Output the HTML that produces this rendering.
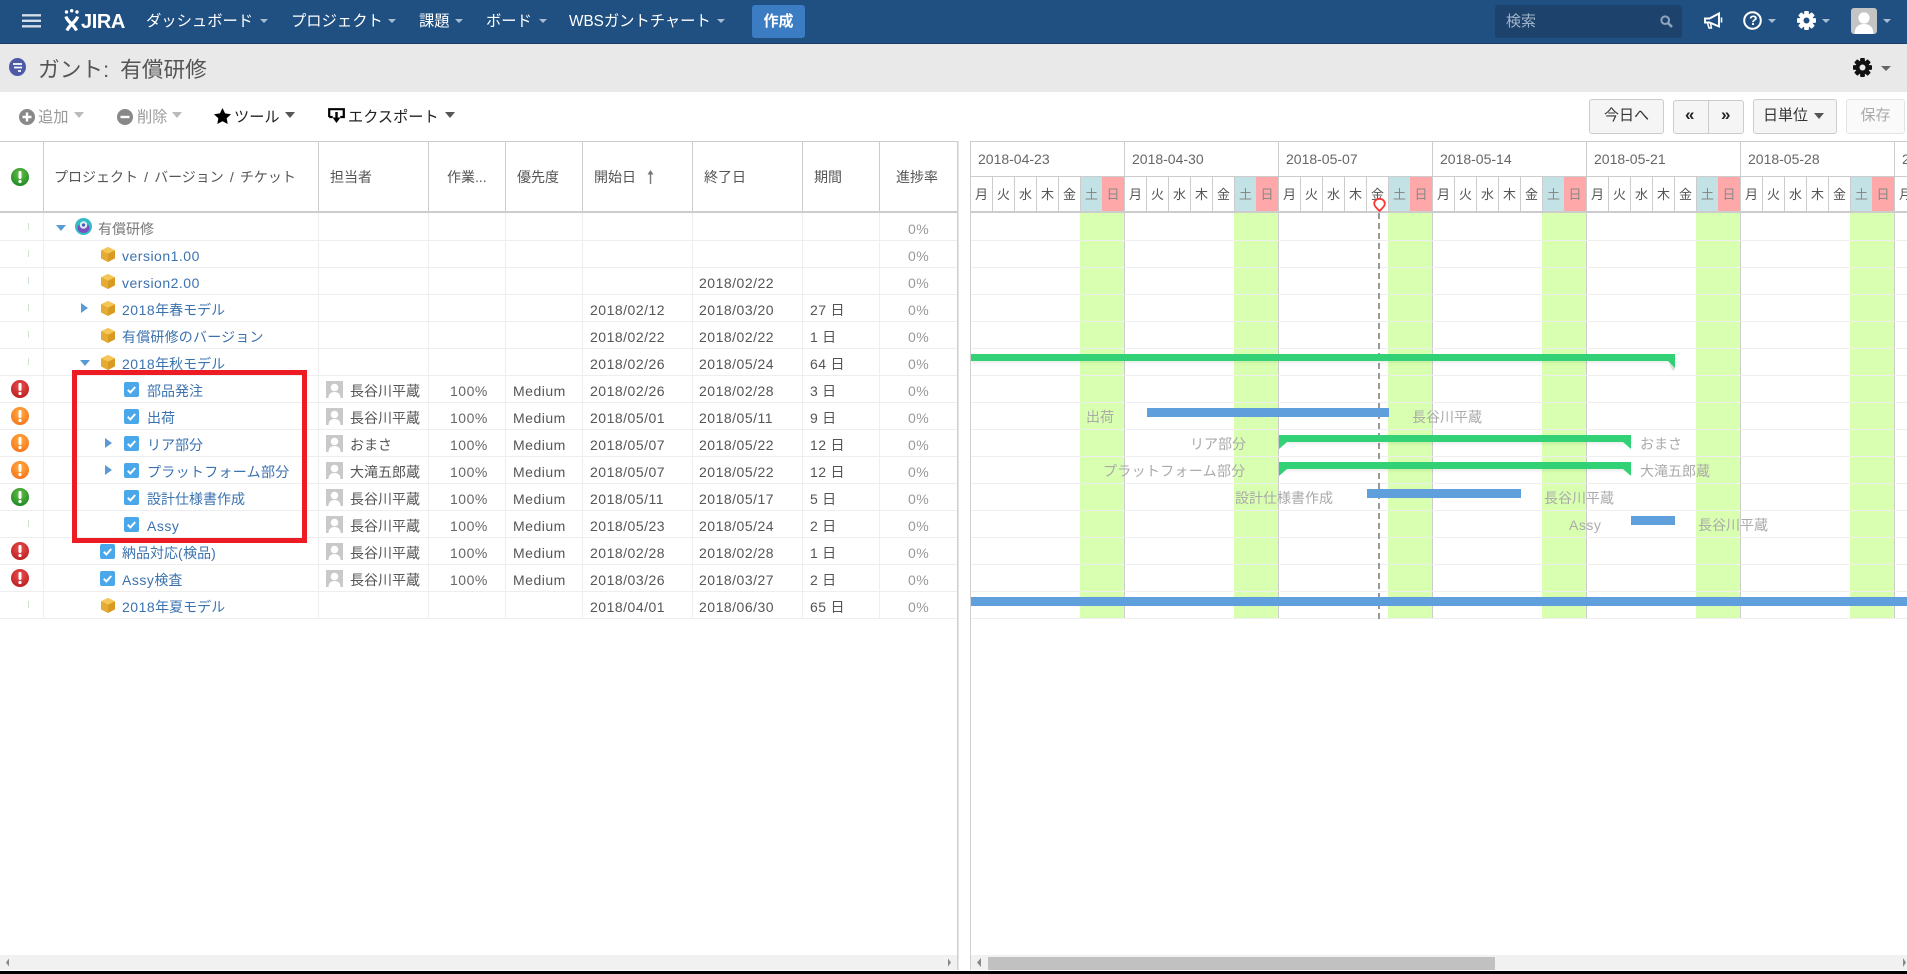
<!DOCTYPE html>
<html lang="ja"><head><meta charset="utf-8"><title>ガント: 有償研修</title>
<style>
html,body{margin:0;padding:0;background:#fff;width:1907px;height:974px;overflow:hidden}
body{position:relative;font:14px/27px "Liberation Sans","Noto Sans CJK JP",sans-serif;color:#555}
div,span,svg,a{position:absolute;white-space:nowrap}
i{font-style:normal;letter-spacing:.5px}
svg{overflow:visible}
#nav{left:0;top:0;width:1907px;height:43px;background:#205081;border-bottom:1px solid #1a3f66}
.n{top:7px;font-size:15.3px;line-height:30px;color:#fff}
.c{width:0;height:0;border-left:4.5px solid transparent;border-right:4.5px solid transparent;border-top:4.5px solid #a9bdd3}
#ph{left:0;top:44px;width:1907px;height:48px;background:#e9e9e9}
.tb{top:103px;font-size:15.2px;line-height:30px;color:#222}
.btn{box-sizing:border-box;background:#f5f5f5;border:1px solid #ccc;border-radius:3px;font-size:15px;color:#333;text-align:center;line-height:32px}
.v{top:213px;width:1px;height:406px;background:#eee}
.hv{top:141px;width:1px;height:70px;background:#ccc}
.h{top:162px;line-height:30px;color:#444;font-size:14px}
.r{left:0;width:957px;height:27px}
.r span{top:3px}
.p{left:11px;top:5px;width:18px;height:18px}
.k{left:28px;top:10px;width:1px;height:7px;background:#cfe3cf}
.a{left:326px;top:6px;width:17px;height:17px}
.b{left:101px;top:7px;width:14px;height:15px}
.cb{top:7px;width:15px;height:15px}
.l1{left:124px}.l2{left:100px}
.lk{color:#3b73af}
.tl{left:147px}.tx{left:122px}
.nm{left:350px}.pc{left:450px;color:#666}.pr{left:513px}.sd{left:590px}.ed{left:699px}.du{left:810px}.pg{left:908px;color:#999}
.tr{position:absolute;width:0;height:0;border-top:5.5px solid transparent;border-bottom:5.5px solid transparent;border-left:7px solid #5b9bd5}
.td{position:absolute;width:0;height:0;border-left:5.5px solid transparent;border-right:5.5px solid transparent;border-top:6px solid #5b9bd5}
#wk{left:970px;top:141px;width:937px;height:36px;background:#fff}
.w{top:0;height:36px;width:154px;box-sizing:border-box;border-left:1px solid #ccc;padding-left:7px;font-size:14px;line-height:36px;color:#666}
#dy{left:970px;top:177px;width:937px;height:34px;display:flex;overflow:hidden}
#dy u{display:block;flex:0 0 22px;box-sizing:border-box;border-left:1px solid #ccc;text-decoration:none;text-align:center;font-size:13px;line-height:35px;color:#555;height:34px}
#dy u:nth-child(7n+6){background:#c2e2e6;color:#888}
#dy u:nth-child(7n){background:#ffa8aa;color:#888;border-left:none}
.gr{top:213px;width:44px;height:406px;background:#d9ffb0}
.gl{top:213px;width:1px;height:406px;background:#ccc}
.bb{height:9px;background:#5e9fdc}
.bg{height:7px;background:#32d175;box-shadow:0 2px 3px rgba(0,0,0,.08)}
.gt{color:#aaa;line-height:27px}
</style></head><body>
<svg width="0" height="0" style="left:0;top:0">
<defs>
<radialGradient id="gr1" cx=".5" cy=".35" r=".7"><stop offset="0" stop-color="#ee5050"/><stop offset="1" stop-color="#b81c1c"/></radialGradient>
<radialGradient id="gr2" cx=".5" cy=".35" r=".7"><stop offset="0" stop-color="#ffb040"/><stop offset="1" stop-color="#f6701a"/></radialGradient>
<radialGradient id="gr3" cx=".5" cy=".35" r=".7"><stop offset="0" stop-color="#6cc04a"/><stop offset="1" stop-color="#17861f"/></radialGradient>
<symbol id="wr" viewBox="0 0 18 18"><circle cx="9" cy="9" r="9" fill="url(#gr1)"/><rect x="7.5" y="3" width="3" height="8" rx="1.2" fill="#fff"/><circle cx="9" cy="13.5" r="1.6" fill="#fff"/></symbol>
<symbol id="wo" viewBox="0 0 18 18"><circle cx="9" cy="9" r="9" fill="url(#gr2)"/><rect x="7.5" y="3" width="3" height="8" rx="1.2" fill="#fff"/><circle cx="9" cy="13.5" r="1.6" fill="#fff"/></symbol>
<symbol id="wg" viewBox="0 0 18 18"><circle cx="9" cy="9" r="9" fill="url(#gr3)"/><rect x="7.5" y="3" width="3" height="8" rx="1.2" fill="#fff"/><circle cx="9" cy="13.5" r="1.6" fill="#fff"/></symbol>
<symbol id="av" viewBox="0 0 17 17"><rect width="17" height="17" fill="#c9c9c9"/><circle cx="8.5" cy="6.5" r="3.8" fill="#fff"/><path d="M2.5 17c0-4 2.5-6 6-6s6 2 6 6z" fill="#fff"/></symbol>
<symbol id="cb" viewBox="0 0 15 15"><rect width="15" height="15" rx="2" fill="#4aa8ea"/><path d="M3.8 7.8l2.6 2.6 4.8-5.4" fill="none" stroke="#fff" stroke-width="2"/></symbol>
<symbol id="bx" viewBox="0 0 14 15"><path d="M7 0l7 3.4v8L7 15 0 11.4v-8z" fill="#d99a22"/><path d="M7 0l7 3.4L7 6.8 0 3.4z" fill="#f4c655"/><path d="M7 6.8v8.2L0 11.4v-8z" fill="#e5ac35"/></symbol>
<symbol id="gear" viewBox="0 0 20 20"><g fill="currentColor"><rect x="7.5" y="0" width="5" height="20" rx="1"/><rect x="7.5" y="0" width="5" height="20" rx="1" transform="rotate(45 10 10)"/><rect x="7.5" y="0" width="5" height="20" rx="1" transform="rotate(90 10 10)"/><rect x="7.5" y="0" width="5" height="20" rx="1" transform="rotate(135 10 10)"/><circle cx="10" cy="10" r="7.2"/></g></symbol>
</defs></svg>

<div id="nav"></div>
<svg style="left:22px;top:14px" width="19" height="14"><path d="M0 1.3h19M0 6.8h19M0 12.3h19" stroke="#d3deea" stroke-width="2.4"/></svg>
<svg style="left:64px;top:9px" width="16" height="22"><g fill="#fff"><circle cx="2.5" cy="3" r="1.7"/><circle cx="7.7" cy="1.7" r="1.7"/><circle cx="13" cy="3" r="1.7"/></g><path d="M2 7.5c1 5 8 8 10.5 14M13.5 7.5c-1 5-8 8-10.5 14" stroke="#fff" stroke-width="3.2" fill="none"/></svg>
<span style="left:81px;top:7px;font:bold 20px/30px 'Liberation Sans',sans-serif;color:#fff;letter-spacing:-.4px">JIRA</span>
<span class="n" style="left:146px">ダッシュボード</span><div class="c" style="left:260px;top:19px"></div>
<span class="n" style="left:291px">プロジェクト</span><div class="c" style="left:388px;top:19px"></div>
<span class="n" style="left:419px">課題</span><div class="c" style="left:455px;top:19px"></div>
<span class="n" style="left:486px">ボード</span><div class="c" style="left:539px;top:19px"></div>
<span class="n" style="left:569px">WBSガントチャート</span><div class="c" style="left:717px;top:19px"></div>
<div style="left:752px;top:5px;width:53px;height:33px;background:#3b7cc2;border-radius:3px;color:#fff;font-weight:bold;font-size:15px;line-height:33px;text-align:center">作成</div>
<div style="left:1495px;top:5px;width:187px;height:33px;background:#1d426c;border-radius:3px"></div>
<span style="left:1506px;top:6px;font-size:15px;line-height:31px;color:#9fb4cc">検索</span>
<svg style="left:1660px;top:15px" width="13" height="13"><circle cx="5.2" cy="5.2" r="3.8" fill="none" stroke="#8ea4bc" stroke-width="2"/><path d="M8 8l4 4" stroke="#8ea4bc" stroke-width="2.6"/></svg>
<svg style="left:1704px;top:12px" width="19" height="18"><path d="M1 6.5h4.5L15 1.5v13L5.5 10.5H1z" fill="none" stroke="#fff" stroke-width="1.9"/><path d="M3.5 11l1.5 5h2.4L6.5 11" fill="none" stroke="#fff" stroke-width="1.5"/><path d="M17.5 5.5v5" stroke="#fff" stroke-width="1.6"/></svg>
<svg style="left:1743px;top:11px" width="19" height="19"><circle cx="9.5" cy="9.5" r="8.3" fill="none" stroke="#fff" stroke-width="2"/></svg>
<span style="left:1749px;top:5px;font:bold 14px/30px 'Liberation Sans',sans-serif;color:#fff">?</span>
<div class="c" style="left:1768px;top:19px"></div>
<svg style="left:1797px;top:11px;color:#fff" width="19" height="19"><use href="#gear"/><circle cx="9.5" cy="9.5" r="3" fill="#205081"/></svg>
<div class="c" style="left:1822px;top:19px"></div>
<svg style="left:1851px;top:8px" width="26" height="26"><rect width="26" height="26" rx="3" fill="#c4c4c4"/><circle cx="13" cy="10" r="5.6" fill="#fff"/><path d="M3.5 26c0-7 4-10 9.5-10s9.5 3 9.5 10z" fill="#fff"/></svg>
<div class="c" style="left:1883px;top:19px"></div>

<div id="ph"></div>
<svg style="left:9px;top:58px" width="17" height="18"><ellipse cx="8.5" cy="9" rx="8.5" ry="9" fill="#4d5aa8"/><path d="M4 6h9M5 9.5h8M9 13h3" stroke="#fff" stroke-width="1.8" fill="none"/></svg>
<span style="left:38px;top:53px;font-size:21.7px;line-height:34px;color:#555;word-spacing:5px">ガント: 有償研修</span>
<svg style="left:1853px;top:58px;color:#111" width="19" height="19"><use href="#gear"/><circle cx="9.5" cy="9.5" r="3" fill="#e9e9e9"/></svg>
<div class="c" style="left:1881px;top:66px;border-left-width:5.5px;border-right-width:5.5px;border-top:5.5px solid #666"></div>

<svg style="left:19px;top:108.5px" width="16" height="16"><circle cx="8" cy="8" r="8" fill="#888"/><path d="M3.5 8h9M8 3.5v9" stroke="#fff" stroke-width="2.4"/></svg>
<span class="tb" style="left:38px;color:#999">追加</span><div class="c" style="left:74px;top:112px;border-width:6px 5.5px 0;border-top-color:#bbb"></div>
<svg style="left:117px;top:108.5px" width="16" height="16"><circle cx="8" cy="8" r="8" fill="#888"/><path d="M3.5 8h9" stroke="#fff" stroke-width="2.4"/></svg>
<span class="tb" style="left:137px;color:#999">削除</span><div class="c" style="left:172px;top:112px;border-width:6px 5.5px 0;border-top-color:#bbb"></div>
<svg style="left:214px;top:108px" width="17" height="16"><path d="M8.5 0l2.6 5.4 5.9.8-4.3 4.1 1 5.7-5.2-2.8-5.200 2.8 1-5.700L0 6.200l5.900-.8z" fill="#000"/></svg>
<span class="tb" style="left:234px">ツール</span><div class="c" style="left:285px;top:112px;border-width:6px 5.5px 0;border-top-color:#555"></div>
<svg style="left:328px;top:108px" width="17" height="16"><path d="M1.2 9V1.2h14.600V9h-3.500M1.200 9h3.500" fill="none" stroke="#000" stroke-width="2.200"/><path d="M8.500 4v8" stroke="#000" stroke-width="2.400"/><path d="M4.500 9.500h8l-4 5.500z" fill="#000"/></svg>
<span class="tb" style="left:348px">エクスポート</span><div class="c" style="left:445px;top:112px;border-width:6px 5.5px 0;border-top-color:#555"></div>

<div class="btn" style="left:1589px;top:99px;width:75px;height:35px">今日へ</div>
<div class="btn" style="left:1673px;top:100px;width:71px;height:34px"></div>
<div style="left:1708px;top:101px;width:1px;height:32px;background:#ccc"></div>
<span style="left:1685px;top:100px;font:bold 17px/30px 'Liberation Sans',sans-serif;color:#222">«</span>
<span style="left:1721px;top:100px;font:bold 17px/30px 'Liberation Sans',sans-serif;color:#222">»</span>
<div class="btn" style="left:1753px;top:99px;width:84px;height:35px"></div>
<span style="left:1763px;top:101px;font-size:15px;line-height:30px;color:#333">日単位</span>
<div class="c" style="left:1814px;top:113px;border-width:6px 5.5px 0;border-top-color:#555"></div>
<div class="btn" style="left:1846px;top:99px;width:59px;height:35px;background:#fafafa;border-color:#e4e4e4;color:#aaa">保存</div>

<!-- table header -->
<div style="left:0;top:141px;width:957px;height:1px;background:#ccc"></div>
<div style="left:0;top:211px;width:957px;height:2px;background:#ccc"></div>
<div class="hv" style="left:43px"></div><div class="hv" style="left:318px"></div><div class="hv" style="left:428px"></div><div class="hv" style="left:505px"></div><div class="hv" style="left:582px"></div><div class="hv" style="left:692px"></div><div class="hv" style="left:802px"></div><div class="hv" style="left:879px"></div>
<svg style="left:11px;top:168px" width="18" height="18"><use href="#wg"/></svg>
<span class="h" style="left:54px;word-spacing:2.2px;color:#555">プロジェクト / バージョン / チケット</span>
<span class="h" style="left:330px;color:#555">担当者</span>
<span class="h" style="left:447px;color:#555">作業...</span>
<span class="h" style="left:517px;color:#555">優先度</span>
<span class="h" style="left:594px;color:#555">開始日</span>
<svg style="left:647px;top:170px" width="7" height="14"><path d="M3.5 14V2" stroke="#777" stroke-width="1.4"/><path d="M.5 4.5L3.500 0l3 4.500z" fill="#777"/></svg>
<span class="h" style="left:704px;color:#555">終了日</span>
<span class="h" style="left:814px;color:#555">期間</span>
<span class="h" style="left:896px;color:#555">進捗率</span>

<!-- grid -->
<div class="v" style="left:43px"></div><div class="v" style="left:318px"></div><div class="v" style="left:428px"></div><div class="v" style="left:505px"></div><div class="v" style="left:582px"></div><div class="v" style="left:692px"></div><div class="v" style="left:802px"></div><div class="v" style="left:879px"></div>
<div style="left:0;top:214px;width:957px;height:405px;background:repeating-linear-gradient(transparent 0,transparent 26px,#eee 26px,#eee 27px)"></div>
<div style="left:957px;top:141px;width:1px;height:829px;background:#d0d0d0"></div>
<div style="left:958px;top:141px;width:1px;height:829px;background:#e4e4e4"></div>
<div style="left:970px;top:141px;width:1px;height:829px;background:#d0d0d0"></div>

<!-- rows -->
<div class="r" style="top:213px"><div class="k"></div><div class="td" style="left:56px;top:12px"></div>
<svg style="left:75px;top:5px" width="17" height="17"><circle cx="8.5" cy="8.5" r="8.5" fill="#33bcc6"/><ellipse cx="8.5" cy="10" rx="6" ry="5" fill="#7b4fc0"/><circle cx="8.5" cy="7" r="3.8" fill="#ddeef5"/><circle cx="8.5" cy="7" r="1.6" fill="#4a5ba8"/></svg>
<span style="left:98px;color:#777">有償研修</span><span class="pg"><i>0%</i></span></div>

<div class="r" style="top:240px"><div class="k"></div><svg class="b"><use href="#bx"/></svg><span class="tx lk"><i>version1.00</i></span><span class="pg"><i>0%</i></span></div>

<div class="r" style="top:267px"><div class="k"></div><svg class="b"><use href="#bx"/></svg><span class="tx lk"><i>version2.00</i></span><span class="ed"><i>2018/02/22</i></span><span class="pg"><i>0%</i></span></div>

<div class="r" style="top:294px"><div class="k"></div><div class="tr" style="left:81px;top:9px"></div><svg class="b"><use href="#bx"/></svg><span class="tx lk"><i>2018</i>年春モデル</span><span class="sd"><i>2018/02/12</i></span><span class="ed"><i>2018/03/20</i></span><span class="du"><i>27</i> 日</span><span class="pg"><i>0%</i></span></div>

<div class="r" style="top:321px"><div class="k"></div><svg class="b"><use href="#bx"/></svg><span class="tx lk" style="letter-spacing:.2px">有償研修のバージョン</span><span class="sd"><i>2018/02/22</i></span><span class="ed"><i>2018/02/22</i></span><span class="du"><i>1</i> 日</span><span class="pg"><i>0%</i></span></div>

<div class="r" style="top:348px"><div class="k"></div><div class="td" style="left:80px;top:12px"></div><svg class="b"><use href="#bx"/></svg><span class="tx lk"><i>2018</i>年秋モデル</span><span class="sd"><i>2018/02/26</i></span><span class="ed"><i>2018/05/24</i></span><span class="du"><i>64</i> 日</span><span class="pg"><i>0%</i></span></div>

<div class="r" style="top:375px"><svg class="p"><use href="#wr"/></svg><svg class="cb l1"><use href="#cb"/></svg><span class="tl lk">部品発注</span><svg class="a"><use href="#av"/></svg><span class="nm">長谷川平蔵</span><span class="pc"><i>100%</i></span><span class="pr"><i>Medium</i></span><span class="sd"><i>2018/02/26</i></span><span class="ed"><i>2018/02/28</i></span><span class="du"><i>3</i> 日</span><span class="pg"><i>0%</i></span></div>

<div class="r" style="top:402px"><svg class="p"><use href="#wo"/></svg><svg class="cb l1"><use href="#cb"/></svg><span class="tl lk">出荷</span><svg class="a"><use href="#av"/></svg><span class="nm">長谷川平蔵</span><span class="pc"><i>100%</i></span><span class="pr"><i>Medium</i></span><span class="sd"><i>2018/05/01</i></span><span class="ed"><i>2018/05/11</i></span><span class="du"><i>9</i> 日</span><span class="pg"><i>0%</i></span></div>

<div class="r" style="top:429px"><svg class="p"><use href="#wo"/></svg><div class="tr" style="left:105px;top:9px"></div><svg class="cb l1"><use href="#cb"/></svg><span class="tl lk">リア部分</span><svg class="a"><use href="#av"/></svg><span class="nm">おまさ</span><span class="pc"><i>100%</i></span><span class="pr"><i>Medium</i></span><span class="sd"><i>2018/05/07</i></span><span class="ed"><i>2018/05/22</i></span><span class="du"><i>12</i> 日</span><span class="pg"><i>0%</i></span></div>

<div class="r" style="top:456px"><svg class="p"><use href="#wo"/></svg><div class="tr" style="left:105px;top:9px"></div><svg class="cb l1"><use href="#cb"/></svg><span class="tl lk" style="letter-spacing:.3px">プラットフォーム部分</span><svg class="a"><use href="#av"/></svg><span class="nm">大滝五郎蔵</span><span class="pc"><i>100%</i></span><span class="pr"><i>Medium</i></span><span class="sd"><i>2018/05/07</i></span><span class="ed"><i>2018/05/22</i></span><span class="du"><i>12</i> 日</span><span class="pg"><i>0%</i></span></div>

<div class="r" style="top:483px"><svg class="p"><use href="#wg"/></svg><svg class="cb l1"><use href="#cb"/></svg><span class="tl lk">設計仕様書作成</span><svg class="a"><use href="#av"/></svg><span class="nm">長谷川平蔵</span><span class="pc"><i>100%</i></span><span class="pr"><i>Medium</i></span><span class="sd"><i>2018/05/11</i></span><span class="ed"><i>2018/05/17</i></span><span class="du"><i>5</i> 日</span><span class="pg"><i>0%</i></span></div>

<div class="r" style="top:510px"><div class="k"></div><svg class="cb l1"><use href="#cb"/></svg><span class="tl lk"><i>Assy</i></span><svg class="a"><use href="#av"/></svg><span class="nm">長谷川平蔵</span><span class="pc"><i>100%</i></span><span class="pr"><i>Medium</i></span><span class="sd"><i>2018/05/23</i></span><span class="ed"><i>2018/05/24</i></span><span class="du"><i>2</i> 日</span><span class="pg"><i>0%</i></span></div>

<div class="r" style="top:537px"><svg class="p"><use href="#wr"/></svg><svg class="cb l2"><use href="#cb"/></svg><span class="tx lk">納品対応<i>(</i>検品<i>)</i></span><svg class="a"><use href="#av"/></svg><span class="nm">長谷川平蔵</span><span class="pc"><i>100%</i></span><span class="pr"><i>Medium</i></span><span class="sd"><i>2018/02/28</i></span><span class="ed"><i>2018/02/28</i></span><span class="du"><i>1</i> 日</span><span class="pg"><i>0%</i></span></div>

<div class="r" style="top:564px"><svg class="p"><use href="#wr"/></svg><svg class="cb l2"><use href="#cb"/></svg><span class="tx lk"><i>Assy</i>検査</span><svg class="a"><use href="#av"/></svg><span class="nm">長谷川平蔵</span><span class="pc"><i>100%</i></span><span class="pr"><i>Medium</i></span><span class="sd"><i>2018/03/26</i></span><span class="ed"><i>2018/03/27</i></span><span class="du"><i>2</i> 日</span><span class="pg"><i>0%</i></span></div>

<div class="r" style="top:591px"><div class="k"></div><svg class="b"><use href="#bx"/></svg><span class="tx lk"><i>2018</i>年夏モデル</span><span class="sd"><i>2018/04/01</i></span><span class="ed"><i>2018/06/30</i></span><span class="du"><i>65</i> 日</span><span class="pg"><i>0%</i></span></div>

<!-- gantt header -->
<div id="wk">
<div class="w" style="left:0">2018-04-23</div><div class="w" style="left:154px">2018-04-30</div><div class="w" style="left:308px">2018-05-07</div><div class="w" style="left:462px">2018-05-14</div><div class="w" style="left:616px">2018-05-21</div><div class="w" style="left:770px">2018-05-28</div><div class="w" style="left:924px;width:13px;overflow:hidden">2018-06-04</div>
</div>
<div style="left:970px;top:141px;width:937px;height:1px;background:#ccc"></div>
<div style="left:970px;top:176px;width:937px;height:1px;background:#ccc"></div>
<div id="dy"><u>月</u><u>火</u><u>水</u><u>木</u><u>金</u><u>土</u><u>日</u><u>月</u><u>火</u><u>水</u><u>木</u><u>金</u><u>土</u><u>日</u><u>月</u><u>火</u><u>水</u><u>木</u><u>金</u><u>土</u><u>日</u><u>月</u><u>火</u><u>水</u><u>木</u><u>金</u><u>土</u><u>日</u><u>月</u><u>火</u><u>水</u><u>木</u><u>金</u><u>土</u><u>日</u><u>月</u><u>火</u><u>水</u><u>木</u><u>金</u><u>土</u><u>日</u><u>月</u></div>
<div style="left:970px;top:211px;width:937px;height:2px;background:#ccc"></div>

<!-- gantt body -->
<div class="gr" style="left:1080px"></div><div class="gr" style="left:1234px"></div><div class="gr" style="left:1388px"></div><div class="gr" style="left:1542px"></div><div class="gr" style="left:1696px"></div><div class="gr" style="left:1850px"></div>
<div class="gl" style="left:1124px"></div><div class="gl" style="left:1278px"></div><div class="gl" style="left:1432px"></div><div class="gl" style="left:1586px"></div><div class="gl" style="left:1740px"></div><div class="gl" style="left:1894px"></div>
<div style="left:971px;top:214px;width:936px;height:405px;background:repeating-linear-gradient(transparent 0,transparent 26px,#eee 26px,#eee 27px)"></div>
<svg style="left:1378px;top:213px" width="2" height="406"><path d="M1 0V406" stroke="#999" stroke-width="2" stroke-dasharray="6 4"/></svg>
<svg style="left:1372.5px;top:198px" width="13" height="14"><path d="M6.5 13C3 9.5 1.2 7.8 1.2 5.6a5.3 4.8 0 0 1 10.6 0C11.8 7.8 10 9.5 6.5 13z" fill="#fff" stroke="#f33" stroke-width="1.8"/></svg>

<span class="gt" style="left:1086px;top:404px">出荷</span>
<span class="gt" style="left:1412px;top:404px">長谷川平蔵</span>
<span class="gt" style="left:1190px;top:431px">リア部分</span>
<span class="gt" style="left:1640px;top:431px">おまさ</span>
<span class="gt" style="left:1103px;top:458px;letter-spacing:.3px">プラットフォーム部分</span>
<span class="gt" style="left:1640px;top:458px">大滝五郎蔵</span>
<span class="gt" style="left:1235px;top:485px">設計仕様書作成</span>
<span class="gt" style="left:1544px;top:485px">長谷川平蔵</span>
<span class="gt" style="left:1569px;top:512px"><i>Assy</i></span>
<span class="gt" style="left:1698px;top:512px">長谷川平蔵</span>

<div class="bg" style="left:971px;top:354px;width:704px"></div>
<svg style="left:1666px;top:361px" width="10" height="10"><path d="M3 3l6-1v6l-2 2z" fill="#ddd"/><path d="M2 0h7v7z" fill="#32d175"/></svg>
<div class="bb" style="left:1147px;top:408px;width:242px"></div>
<div class="bg" style="left:1279px;top:435px;width:352px"></div>
<svg style="left:1279px;top:442px" width="352" height="7"><path d="M0 0h8L0 7zM352 0h-8l8 7z" fill="#32d175"/></svg>
<div class="bg" style="left:1279px;top:462px;width:352px"></div>
<svg style="left:1279px;top:469px" width="352" height="7"><path d="M0 0h8L0 7zM352 0h-8l8 7z" fill="#32d175"/></svg>
<div class="bb" style="left:1367px;top:489px;width:154px"></div>
<div class="bb" style="left:1631px;top:516px;width:44px"></div>
<div class="bb" style="left:971px;top:597px;width:936px"></div>

<!-- red highlight -->
<div style="left:72px;top:370px;width:225px;height:163px;border:5px solid #ed1c24"></div>

<!-- scrollbars -->
<div style="left:0;top:955px;width:957px;height:15px;background:#f1f1f1"></div>
<div style="left:971px;top:955px;width:936px;height:15px;background:#f1f1f1"></div>
<div style="left:988px;top:957px;width:507px;height:13px;background:#c1c1c1"></div>
<svg style="left:0;top:955px" width="1907" height="15"><path d="M6 7.5l3-4v8zM951 7.5l-3-4v8zM977 7.5l4-4.5v9zM1906 7.5l-3-4.5v9z" fill="#888"/></svg>
<div style="left:0;top:971px;width:1907px;height:3px;background:#000"></div>
</body></html>
